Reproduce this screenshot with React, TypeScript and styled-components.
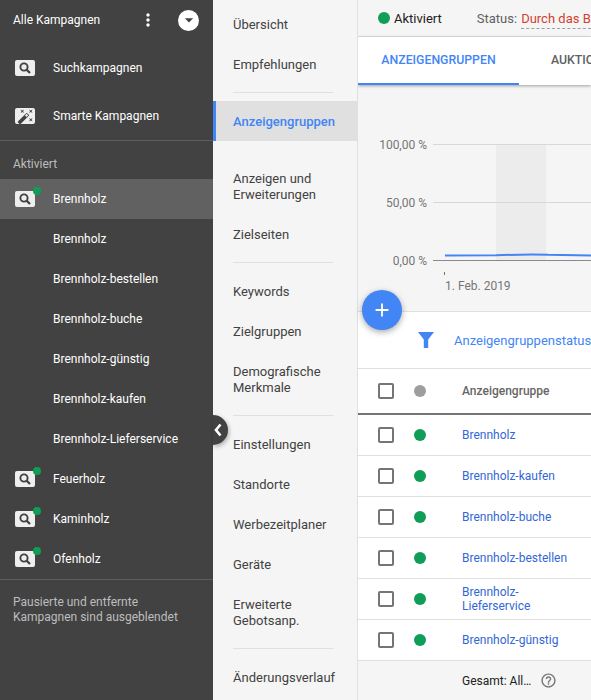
import React from 'react';
import styled, { createGlobalStyle } from 'styled-components';
import { MdAutoFixHigh, MdMoreVert, MdArrowDropDown, MdAdd, MdHelpOutline } from 'react-icons/md';

const GlobalStyle = createGlobalStyle`
  html, body { margin: 0; padding: 0; height: 100%; }
  body { font-family: Roboto, "Liberation Sans", sans-serif; font-size: 13px; overflow: hidden; background: #f5f5f5; }
`;

const Page = styled.div`
  position: relative;
  display: flex;
  width: 591px;
  height: 700px;
  overflow: hidden;
`;

/* left campaign tree */
const Sidebar = styled.aside`
  flex: 0 0 213px;
  height: 700px;
  background: #424242;
  color: #fff;
  font-size: 12px;
`;

const SideHeader = styled.div`
  display: flex;
  align-items: center;
  height: 40px;
  padding-left: 13px;
`;

const SideTitle = styled.span`
  flex: 1;
  line-height: 40px;
`;

const Kebab = styled.span`
  display: flex;
  width: 20px;
  margin-right: 20px;
  font-size: 26px;
  justify-content: center;
`;

const WhiteCircle = styled.span`
  display: flex;
  align-items: center;
  justify-content: center;
  width: 21px;
  height: 21px;
  margin-right: 14px;
  border-radius: 50%;
  background: #fff;
  color: #424242;
  font-size: 20px;
`;

const TypeList = styled.div`
  display: flex;
  flex-direction: column;
  padding-top: 4px;
  border-bottom: 1px solid #5e5e5e;
`;

const Row = styled.div<{ $active?: boolean; $tall?: boolean }>`
  display: flex;
  align-items: center;
  height: ${(p) => (p.$tall ? 48 : 40)}px;
  padding-left: 15px;
  background: ${(p) => (p.$active ? '#616161' : 'transparent')};
`;

const Chip = styled.span`
  position: relative;
  display: flex;
  align-items: center;
  justify-content: center;
  flex: 0 0 20px;
  width: 20px;
  height: 16px;
  margin-right: 18px;
  border-radius: 2px;
  background: #eeeeee;
  color: #424242;
  font-size: 17px;
`;

const Badge = styled.span`
  position: absolute;
  top: -4px;
  right: -6px;
  width: 8px;
  height: 8px;
  border-radius: 50%;
  background: #0f9d58;
`;

const SubRow = styled(Row)`
  padding-left: 53px;
`;

const SectionLabel = styled.div`
  height: 38px;
  padding-left: 13px;
  line-height: 46px;
  color: #bdbdbd;
`;

const SideNote = styled.div`
  border-top: 1px solid #5e5e5e;
  padding: 15px 13px;
  line-height: 15px;
  color: #bdbdbd;
`;

const Collapse = styled.div`
  position: absolute;
  left: 213px;
  top: 415px;
  display: flex;
  align-items: center;
  padding-left: 1px;
  box-sizing: border-box;
  width: 15px;
  height: 30px;
  border-radius: 0 15px 15px 0;
  background: #424242;
  box-shadow: 1px 2px 4px rgba(0, 0, 0, 0.3);
`;

/* middle page menu */
const Menu = styled.nav`
  flex: 0 0 145px;
  box-sizing: border-box;
  height: 700px;
  padding-top: 4px;
  background: #f5f5f5;
  border-right: 1px solid #e0e0e0;
`;

const MenuItem = styled.div<{ $active?: boolean; $double?: boolean; $gap?: boolean }>`
  display: flex;
  align-items: center;
  box-sizing: border-box;
  height: ${(p) => (p.$double ? 56 : 40)}px;
  margin-top: ${(p) => (p.$gap ? 17 : 0)}px;
  padding-top: 1px;
  padding-left: ${(p) => (p.$active ? 17 : 20)}px;
  border-left: ${(p) => (p.$active ? '3px solid #4285f4' : 'none')};
  background: ${(p) => (p.$active ? '#e0e0e0' : 'transparent')};
  color: ${(p) => (p.$active ? '#4285f4' : '#424242')};
  font-weight: ${(p) => (p.$active ? 500 : 400)};
  line-height: 16px;
`;

const MenuDivider = styled.div`
  height: 1px;
  margin: 8px 24px 8px 20px;
  background: #e0e0e0;
`;

/* main panel */
const Main = styled.main`
  flex: 1;
  min-width: 0;
  height: 700px;
  overflow: hidden;
  white-space: nowrap;
`;

const StatusBar = styled.div`
  display: flex;
  align-items: center;
  height: 36px;
  padding-left: 20px;
  border-bottom: 1px solid #e0e0e0;
  background: #f5f5f5;
`;

const Dot = styled.span<{ $grey?: boolean }>`
  display: inline-block;
  flex: 0 0 12px;
  width: 12px;
  height: 12px;
  border-radius: 50%;
  background: ${(p) => (p.$grey ? '#9e9e9e' : '#0f9d58')};
`;

const StatusName = styled.span`
  margin-left: 4px;
  color: #212121;
`;

const StatusLabel = styled.span`
  margin-left: 35px;
  color: #616161;
`;

const StatusValue = styled.span`
  flex: 1;
  margin-left: 4px;
  margin-top: 4px;
  padding-bottom: 2px;
  color: #d23f31;
  border-bottom: 1px dashed #9e9e9e;
`;

const Tabs = styled.div`
  position: relative;
  display: flex;
  height: 48px;
  background: #fff;
  box-shadow: 0 1px 3px rgba(0, 0, 0, 0.35);
`;

const Tab = styled.div<{ $active?: boolean }>`
  flex: 0 0 auto;
  box-sizing: border-box;
  height: 48px;
  min-width: ${(p) => (p.$active ? 161 : 0)}px;
  padding: 0 ${(p) => (p.$active ? 0 : 32)}px;
  text-align: center;
  line-height: 46px;
  font-weight: 500;
  font-size: 12.3px;
  color: ${(p) => (p.$active ? '#4285f4' : '#616161')};
  border-bottom: 2px solid ${(p) => (p.$active ? '#4285f4' : 'transparent')};
`;

const ChartPanel = styled.div`
  height: 226px;
  background: #f5f5f5;
  border-bottom: 1px solid #e0e0e0;

  svg {
    display: block;
  }

  text {
    font-family: Roboto, "Liberation Sans", sans-serif;
    font-size: 12px;
    fill: #757575;
  }
`;

const FilterRow = styled.div`
  display: flex;
  align-items: center;
  height: 56px;
  padding-left: 60px;
  background: #fff;
  border-bottom: 1px solid #e0e0e0;
  color: #4285f4;

  svg {
    flex: 0 0 16px;
  }
`;

const FilterText = styled.span`
  margin-left: 20px;
`;

const Fab = styled.div`
  position: absolute;
  left: 362px;
  top: 290px;
  display: flex;
  align-items: center;
  justify-content: center;
  width: 40px;
  height: 40px;
  border-radius: 50%;
  background: #4285f4;
  color: #fff;
  font-size: 22px;
  box-shadow: 0 2px 6px rgba(0, 0, 0, 0.35);
`;

const TableRow = styled.div<{ $head?: boolean }>`
  display: flex;
  align-items: center;
  height: ${(p) => (p.$head ? 44 : 40)}px;
  padding-left: 20px;
  background: #fff;
  border-bottom: ${(p) => (p.$head ? '2px solid #757575' : '1px solid #e0e0e0')};
`;

const Check = styled.span`
  flex: 0 0 16px;
  box-sizing: border-box;
  width: 16px;
  height: 16px;
  border: 2px solid #757575;
  border-radius: 2px;
`;

const DotCell = styled.span`
  display: flex;
  margin-left: 20px;
  margin-right: 36px;
`;

const HeadText = styled.span`
  font-size: 12px;
  font-weight: 500;
  color: #666;
`;

const GroupLink = styled.span`
  font-size: 12px;
  line-height: 14px;
  color: #3367d6;
`;

const Footer = styled.div`
  display: flex;
  align-items: center;
  height: 39px;
  padding-left: 104px;
  font-size: 12px;
  color: #212121;
`;

const Help = styled.span`
  display: flex;
  margin-left: 9px;
  font-size: 17px;
  color: #757575;
`;

const SearchChip = ({ live }: { live?: boolean }) => (
  <Chip>
    <svg width="12" height="12" viewBox="0 0 12 12">
      <circle cx="5" cy="5" r="3.6" fill="none" stroke="#424242" strokeWidth="1.9" />
      <path d="M7.6 7.6 L11 11" fill="none" stroke="#424242" strokeWidth="2.2" />
    </svg>
    {live && <Badge />}
  </Chip>
);

const subCampaigns = [
  'Brennholz',
  'Brennholz-bestellen',
  'Brennholz-buche',
  'Brennholz-günstig',
  'Brennholz-kaufen',
  'Brennholz-Lieferservice',
];

const groups = ['Brennholz', 'Brennholz-kaufen', 'Brennholz-buche', 'Brennholz-bestellen'];

const App = () => (
  <Page>
    <GlobalStyle />
    <Sidebar>
      <SideHeader>
        <SideTitle>Alle Kampagnen</SideTitle>
        <Kebab>
          <MdMoreVert />
        </Kebab>
        <WhiteCircle>
          <MdArrowDropDown />
        </WhiteCircle>
      </SideHeader>
      <TypeList>
        <Row $tall>
          <SearchChip />
          Suchkampagnen
        </Row>
        <Row $tall>
          <Chip>
            <MdAutoFixHigh />
          </Chip>
          Smarte Kampagnen
        </Row>
      </TypeList>
      <SectionLabel>Aktiviert</SectionLabel>
      <Row $active>
        <SearchChip live />
        Brennholz
      </Row>
      {subCampaigns.map((name) => (
        <SubRow key={name}>{name}</SubRow>
      ))}
      {['Feuerholz', 'Kaminholz', 'Ofenholz'].map((name) => (
        <Row key={name}>
          <SearchChip live />
          {name}
        </Row>
      ))}
      <SideNote>
        Pausierte und entfernte
        <br />
        Kampagnen sind ausgeblendet
      </SideNote>
    </Sidebar>
    <Collapse>
      <svg width="8" height="14" viewBox="0 0 8 14">
        <path d="M6.5 1.5 L2 7 L6.5 12.5" fill="none" stroke="#fff" strokeWidth="2.6" />
      </svg>
    </Collapse>

    <Menu>
      <MenuItem>Übersicht</MenuItem>
      <MenuItem>Empfehlungen</MenuItem>
      <MenuDivider />
      <MenuItem $active>Anzeigengruppen</MenuItem>
      <MenuItem $double $gap>
        <span>
          Anzeigen und
          <br />
          Erweiterungen
        </span>
      </MenuItem>
      <MenuItem>Zielseiten</MenuItem>
      <MenuDivider />
      <MenuItem>Keywords</MenuItem>
      <MenuItem>Zielgruppen</MenuItem>
      <MenuItem $double>
        <span>
          Demografische
          <br />
          Merkmale
        </span>
      </MenuItem>
      <MenuDivider />
      <MenuItem>Einstellungen</MenuItem>
      <MenuItem>Standorte</MenuItem>
      <MenuItem>Werbezeitplaner</MenuItem>
      <MenuItem>Geräte</MenuItem>
      <MenuItem $double>
        <span>
          Erweiterte
          <br />
          Gebotsanp.
        </span>
      </MenuItem>
      <MenuDivider />
      <MenuItem>Änderungsverlauf</MenuItem>
    </Menu>

    <Main>
      <StatusBar>
        <Dot />
        <StatusName>Aktiviert</StatusName>
        <StatusLabel>Status:</StatusLabel>
        <StatusValue>Durch das B</StatusValue>
      </StatusBar>
      <Tabs>
        <Tab $active>ANZEIGENGRUPPEN</Tab>
        <Tab>AUKTIO</Tab>
      </Tabs>
      <ChartPanel>
        <svg width="233" height="226" viewBox="358 85 233 226">
          <rect x="496" y="144" width="50" height="116" fill="#ececec" />
          <line x1="433" y1="144.5" x2="591" y2="144.5" stroke="#d8d8d8" />
          <line x1="433" y1="202.5" x2="591" y2="202.5" stroke="#d8d8d8" />
          <line x1="433" y1="260.5" x2="591" y2="260.5" stroke="#8a8a8a" />
          <path d="M445 255.5 L496 255.3 Q530 254 548 254.8 L591 255.5" fill="none" stroke="#4285f4" strokeWidth="2" />
          <line x1="444.5" y1="272" x2="444.5" y2="275" stroke="#757575" />
          <text x="427" y="148.5" textAnchor="end">100,00 %</text>
          <text x="427" y="206.5" textAnchor="end">50,00 %</text>
          <text x="427" y="264.5" textAnchor="end">0,00 %</text>
          <text x="445" y="289.5">1. Feb. 2019</text>
        </svg>
      </ChartPanel>
      <FilterRow>
        <svg width="16" height="16" viewBox="0 0 16 16">
          <path d="M0 0 H16 L10.2 7.5 V16 H5.8 V7.5 Z" fill="#4285f4" />
        </svg>
        <FilterText>Anzeigengruppenstatus</FilterText>
      </FilterRow>
      <TableRow $head>
        <Check />
        <DotCell>
          <Dot $grey />
        </DotCell>
        <HeadText>Anzeigengruppe</HeadText>
      </TableRow>
      {groups.map((name) => (
        <TableRow key={name}>
          <Check />
          <DotCell>
            <Dot />
          </DotCell>
          <GroupLink>{name}</GroupLink>
        </TableRow>
      ))}
      <TableRow>
        <Check />
        <DotCell>
          <Dot />
        </DotCell>
        <GroupLink>
          Brennholz-
          <br />
          Lieferservice
        </GroupLink>
      </TableRow>
      <TableRow>
        <Check />
        <DotCell>
          <Dot />
        </DotCell>
        <GroupLink>Brennholz-günstig</GroupLink>
      </TableRow>
      <Footer>
        Gesamt: All…
        <Help>
          <MdHelpOutline />
        </Help>
      </Footer>
    </Main>
    <Fab>
      <MdAdd />
    </Fab>
  </Page>
);

export default App;
